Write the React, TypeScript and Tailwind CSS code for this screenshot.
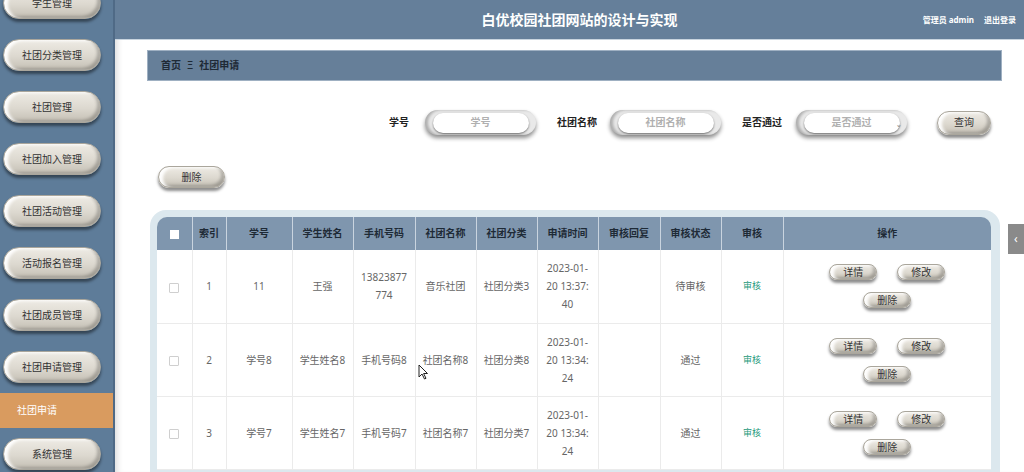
import React from "react";

const FONT = { fontFamily: '"Noto Sans", "Noto Sans CJK SC", sans-serif' };

const pill =
  "rounded-full border border-[#aaa69c] bg-[linear-gradient(180deg,#eeebe4_0%,#dcd8cf_55%,#c4bfb4_100%)] shadow-[inset_4px_1px_3px_rgba(255,255,255,0.95),inset_-3px_-2px_3px_rgba(0,0,0,0.22),0_3px_3px_rgba(0,0,0,0.45)] text-[#333] flex items-center justify-center";

const menu = [
  "社团分类管理",
  "社团管理",
  "社团加入管理",
  "社团活动管理",
  "活动报名管理",
  "社团成员管理",
  "社团申请管理",
];

function SideBtn({ label, className = "" }: { label: string; className?: string }) {
  return (
    <div className={`ml-[3px] w-[98px] h-[32px] text-[10px] ${pill} text-[#3a3a3a] ${className}`}>{label}</div>
  );
}

function Field({ placeholder, select }: { placeholder: string; select?: boolean }) {
  return (
    <div className="relative w-[111px] h-[25px] rounded-full bg-[#e9e9e9] shadow-[0_3px_4px_rgba(0,0,0,0.45),inset_3px_0_3px_rgba(0,0,0,0.25)] flex items-center justify-center">
      <div className="w-[96px] h-[20px] rounded-full bg-white shadow-[0_1px_2px_rgba(0,0,0,0.5)] flex items-center justify-center text-[10px] text-[#b0b0b0]">
        {placeholder}
      </div>
      {select && (
        <span className="absolute right-[5px] top-[11px] text-[7px] text-[#999] leading-none">⌄</span>
      )}
    </div>
  );
}

function ActBtn({ label }: { label: string }) {
  return <div className={`w-[48px] h-[16px] text-[10px] ${pill}`}>{label}</div>;
}

const rows = [
  { i: "1", no: "11", name: "王强", phone: ["13823877", "774"], club: "音乐社团", cat: "社团分类3", time: ["2023-01-", "20 13:37:", "40"], status: "待审核" },
  { i: "2", no: "学号8", name: "学生姓名8", phone: ["手机号码8"], club: "社团名称8", cat: "社团分类8", time: ["2023-01-", "20 13:34:", "24"], status: "通过" },
  { i: "3", no: "学号7", name: "学生姓名7", phone: ["手机号码7"], club: "社团名称7", cat: "社团分类7", time: ["2023-01-", "20 13:34:", "24"], status: "通过" },
];

const widths = [35, 34, 66, 61, 62, 61, 61, 61, 62, 61, 62, 208];
const heads = ["", "索引", "学号", "学生姓名", "手机号码", "社团名称", "社团分类", "申请时间", "审核回复", "审核状态", "审核", "操作"];

export default function App() {
  return (
    <div className="w-[1024px] h-[472px] overflow-hidden flex bg-white relative" style={FONT}>
      {/* Sidebar */}
      <div className="w-[115px] h-full bg-[#5e7c99] border-r-[2px] border-[#4f6a86] overflow-hidden shrink-0">
        <div className="-mt-[13px] flex flex-col">
          <SideBtn label="学生管理" />
          {menu.map((m) => (
            <SideBtn key={m} label={m} className="mt-[20px]" />
          ))}
          <div className="mt-[10px] h-[35px] bg-[#d99b5f] text-white text-[10px] flex items-center pl-[17px] -mr-[2px]">
            社团申请
          </div>
          <SideBtn label="系统管理" className="mt-[10px]" />
        </div>
      </div>

      {/* Main */}
      <div className="flex-1 flex flex-col min-w-0 shadow-[inset_6px_0_6px_-4px_rgba(0,0,0,0.15)]">
        <div className="h-[40px] bg-[#657f9a] border-b border-[#c8d4df] flex items-center relative shrink-0">
          <div className="flex-1 text-center text-white font-bold text-[14px] pl-[20px]">白优校园社团网站的设计与实现</div>
          <div className="absolute right-[8px] top-[14px] text-[8px] font-bold text-white flex gap-[10px]">
            <span>管理员 admin</span>
            <span>退出登录</span>
          </div>
        </div>

        <div className="pl-[32px] pr-[22px] flex flex-col">
          <div className="mt-[10px] h-[31px] bg-[#667f99] border border-[#9fb0c2] flex items-center pl-[13px] text-[10px] font-bold text-[#1f2a36]">
            <span>首页</span>
            <span className="mx-[6px] font-normal">Ξ</span>
            <span>社团申请</span>
          </div>

          <div className="mt-[29px] flex items-center justify-end pr-[11px] text-[10px] font-bold text-[#222]">
            <span>学号</span>
            <div className="ml-[16px]"><Field placeholder="学号" /></div>
            <span className="ml-[21px]">社团名称</span>
            <div className="ml-[13px]"><Field placeholder="社团名称" /></div>
            <span className="ml-[21px]">是否通过</span>
            <div className="ml-[14px]"><Field placeholder="是否通过" select /></div>
            <div className={`ml-[30px] w-[54px] h-[24px] text-[10px] font-normal ${pill}`}>查询</div>
          </div>

          <div className="mt-[31px] ml-[11px]">
            <div className={`w-[67px] h-[22px] text-[10px] ${pill}`}>删除</div>
          </div>

          <div className="mt-[22px] ml-[3px] w-[850px] bg-[#dce8ee] rounded-t-[16px] pt-[7px] px-[7px] pb-[20px]">
            <table className="table-fixed border-collapse w-[834px] text-[10px]">
              <colgroup>
                {widths.map((w, k) => (
                  <col key={k} style={{ width: w }} />
                ))}
              </colgroup>
              <thead>
                <tr className="h-[33px] bg-[#7f96ae]">
                  {heads.map((h, k) => (
                    <th
                      key={k}
                      className={`font-bold text-[#1e2a36] border-l border-[#c9d4df] first:border-l-0 ${k === 0 ? "rounded-tl-[10px]" : ""} ${k === heads.length - 1 ? "rounded-tr-[10px]" : ""}`}
                    >
                      {k === 0 ? (
                        <span className="inline-block w-[9px] h-[9px] bg-white align-middle" />
                      ) : (
                        h
                      )}
                    </th>
                  ))}
                </tr>
              </thead>
              <tbody className="bg-white text-[#666]">
                {rows.map((r) => (
                  <tr key={r.i} className="h-[73px] border-b border-[#ebebeb] text-center leading-[18px]">
                    <td className="border-r border-[#ebebeb]">
                      <span className="inline-block w-[10px] h-[10px] border border-[#cfcfcf] rounded-[1px] bg-white align-middle" />
                    </td>
                    <td className="border-r border-[#ebebeb]">{r.i}</td>
                    <td className="border-r border-[#ebebeb]">{r.no}</td>
                    <td className="border-r border-[#ebebeb]">{r.name}</td>
                    <td className="border-r border-[#ebebeb]">
                      {r.phone.map((p) => (
                        <span key={p} className="block">{p}</span>
                      ))}
                    </td>
                    <td className="border-r border-[#ebebeb]">{r.club}</td>
                    <td className="border-r border-[#ebebeb]">{r.cat}</td>
                    <td className="border-r border-[#ebebeb]">
                      {r.time.map((t, k) => (
                        <span key={k} className="block">{t}</span>
                      ))}
                    </td>
                    <td className="border-r border-[#ebebeb]"></td>
                    <td className="border-r border-[#ebebeb]">{r.status}</td>
                    <td className="border-r border-[#ebebeb] text-[9px] text-[#1f9a7c]">审核</td>
                    <td>
                      <div className="flex flex-col items-center gap-[12px]">
                        <div className="flex gap-[20px]">
                          <ActBtn label="详情" />
                          <ActBtn label="修改" />
                        </div>
                        <ActBtn label="删除" />
                      </div>
                    </td>
                  </tr>
                ))}
              </tbody>
            </table>
          </div>
        </div>
      </div>

      {/* right edge tab */}
      <div className="absolute right-0 top-[224px] w-[16px] h-[30px] bg-[#8a8a8a] flex items-center pl-[6px] text-white text-[12px] leading-none">
        ‹
      </div>

      {/* mouse cursor */}
      <svg className="absolute left-[418px] top-[364px]" width="10" height="16" viewBox="0 0 10 16">
        <path d="M1 1 L1 13 L4 10 L6.5 15 L8 14.3 L5.6 9.5 L9.5 9.5 Z" fill="white" stroke="#222" strokeWidth="1" />
      </svg>
    </div>
  );
}
